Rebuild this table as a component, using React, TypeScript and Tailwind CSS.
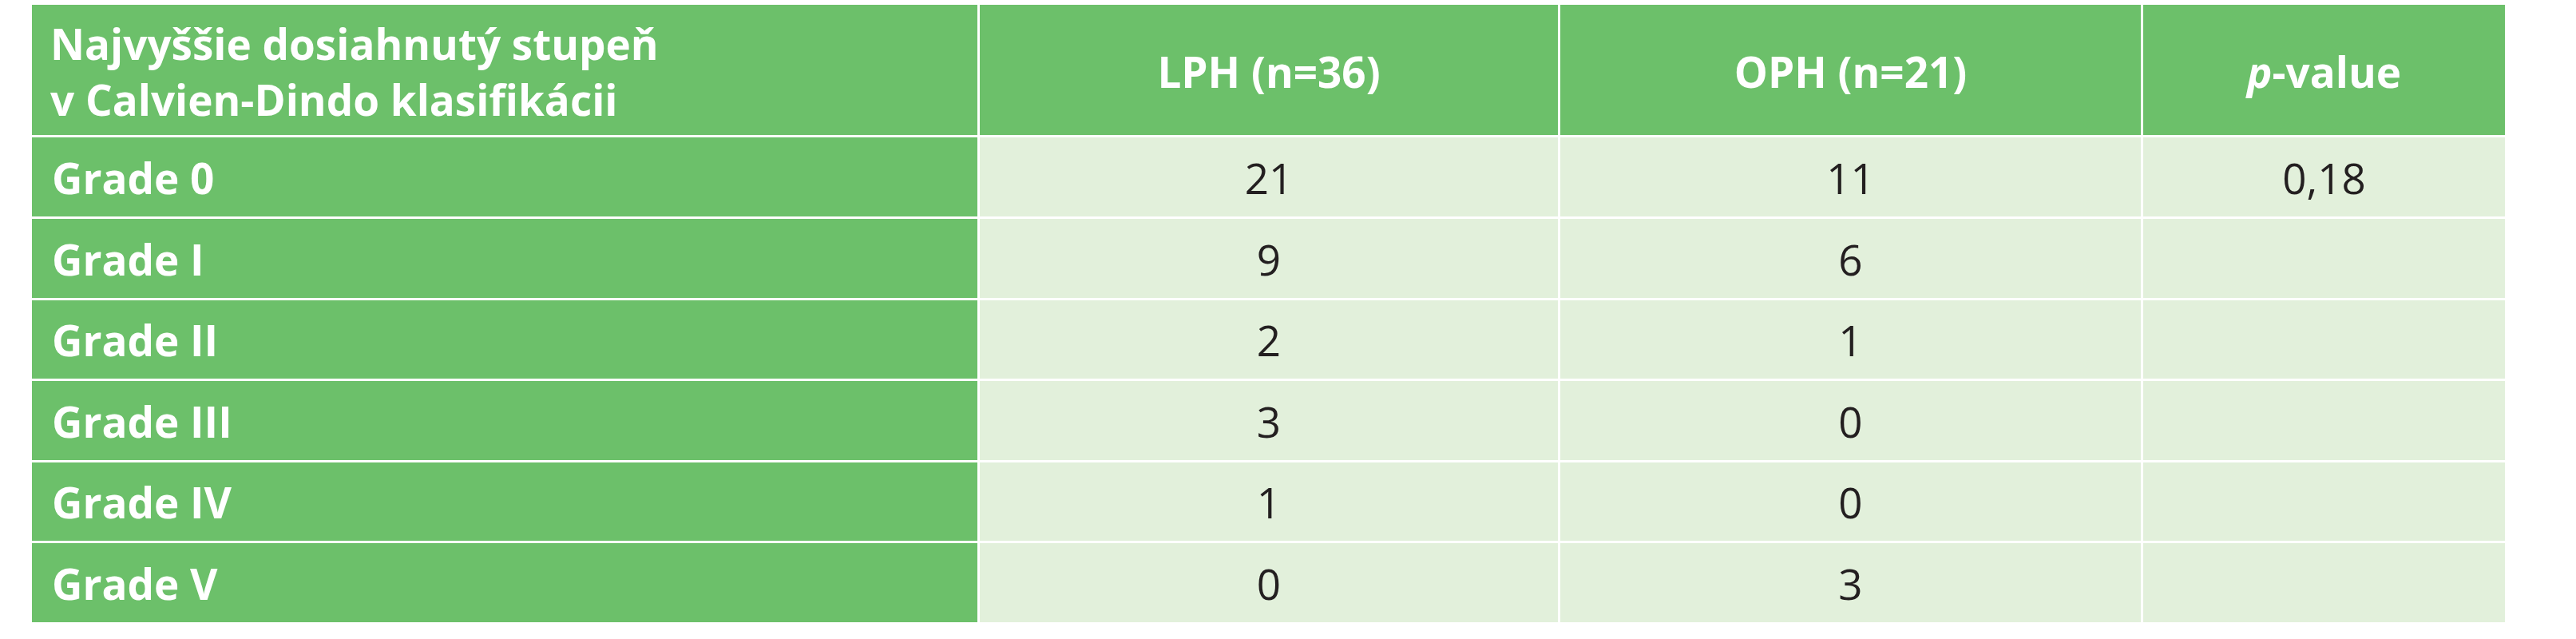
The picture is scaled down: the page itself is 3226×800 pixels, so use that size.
const rows = [
  { grade: 'Grade 0', lph: '21', oph: '11', p: '0,18' },
  { grade: 'Grade I', lph: '9', oph: '6', p: '' },
  { grade: 'Grade II', lph: '2', oph: '1', p: '' },
  { grade: 'Grade III', lph: '3', oph: '0', p: '' },
  { grade: 'Grade IV', lph: '1', oph: '0', p: '' },
  { grade: 'Grade V', lph: '0', oph: '3', p: '' },
];

export default function App() {
  return (
    <div className="min-h-screen bg-white pt-[6px] pl-[40px] font-['Open_Sans','Liberation_Sans',sans-serif]">
      <div className="grid w-[3097px] grid-cols-[1184px_724px_727px_453px] grid-rows-[163px_99px_99px_98px_99px_98px_99px] gap-[3px] text-[53px]">
        {/* Header */}
        <div className="flex flex-col justify-center bg-[#6cc06a] pl-[23px] pt-[4px] font-bold leading-[70px] font-stretch-[96%] text-white">
          <span>Najvyššie dosiahnutý stupeň</span>
          <span>v Calvien-Dindo klasifikácii</span>
        </div>
        <div className="flex items-center justify-center bg-[#6cc06a] pt-[4px] font-bold text-white">LPH (n=36)</div>
        <div className="flex items-center justify-center bg-[#6cc06a] pt-[4px] font-bold text-white">OPH (n=21)</div>
        <div className="flex items-center justify-center bg-[#6cc06a] pt-[4px] font-bold text-white">
          <span><i>p</i>-value</span>
        </div>

        {/* Body */}
        {rows.map((r) => (
          <div key={r.grade} className="contents">
            <div className="flex items-center bg-[#6cc06a] pl-[25px] pt-[2px] font-bold text-white">{r.grade}</div>
            <div className="flex items-center justify-center bg-[#e2f0db] pt-[2px] text-[#231f20]">{r.lph}</div>
            <div className="flex items-center justify-center bg-[#e2f0db] pt-[2px] text-[#231f20]">{r.oph}</div>
            <div className="flex items-center justify-center bg-[#e2f0db] pt-[2px] text-[#231f20]">{r.p}</div>
          </div>
        ))}
      </div>
    </div>
  );
}
